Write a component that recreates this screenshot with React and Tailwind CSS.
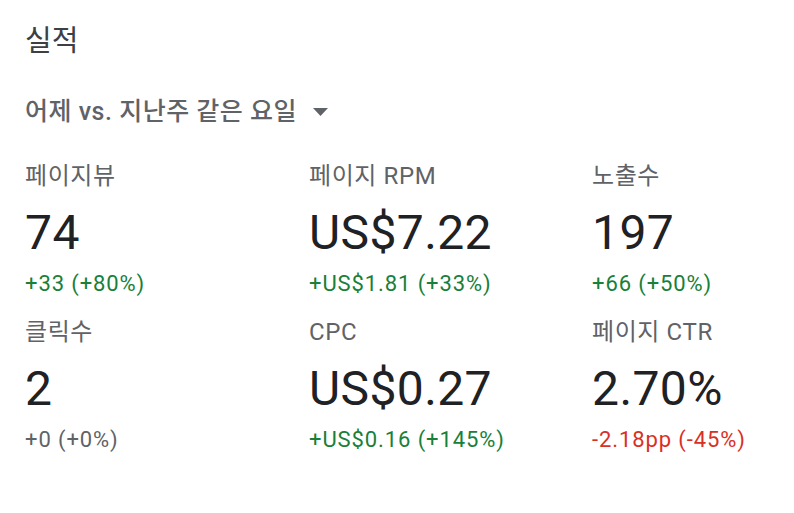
import React from 'react';

const metrics = [
  { label: '페이지뷰', value: '74', delta: '+33 (+80%)', tone: 'up' },
  { label: '페이지 RPM', value: 'US$7.22', delta: '+US$1.81 (+33%)', tone: 'up' },
  { label: '노출수', value: '197', delta: '+66 (+50%)', tone: 'up' },
  { label: '클릭수', value: '2', delta: '+0 (+0%)', tone: 'flat' },
  { label: 'CPC', value: 'US$0.27', delta: '+US$0.16 (+145%)', tone: 'up' },
  { label: '페이지 CTR', value: '2.70%', delta: '-2.18pp (-45%)', tone: 'down' },
];

const toneClass = {
  up: 'text-[#188038]',
  down: 'text-[#d93025]',
  flat: 'text-[#5f6368]',
};

const font = { fontFamily: 'Roboto, "Noto Sans CJK KR", sans-serif' };

const Metric = ({ label, value, delta, tone }) => (
  <div className="flex flex-col">
    <div className="text-[24px] leading-[28px] tracking-[0.6px] text-[#5f6368]">{label}</div>
    <div className="mt-[15px] text-[48px] leading-[56px] text-[#202124] tracking-[0.4px]">{value}</div>
    <div className={`mt-[11px] text-[22px] leading-[24px] tracking-[0.9px] ${toneClass[tone]}`}>{delta}</div>
  </div>
);

export default function App() {
  return (
    <div className="w-[794px] h-[513px] bg-white pl-[25px] pt-[25px]" style={font}>
      <h1 className="text-[29px] leading-[32px] text-[#3c4043]">실적</h1>
      <button className="mt-[39px] flex items-center gap-[16px] text-[25px] leading-[32px] font-medium tracking-[0.5px] text-[#5f6368]">
        <span>어제 vs. 지난주 같은 요일</span>
        <svg width="15" height="8" viewBox="0 0 15 8">
          <path d="M0 0h15L7.5 8z" fill="#5f6368" />
        </svg>
      </button>
      <div className="mt-[34px] grid grid-cols-[284px_283px_1fr] gap-y-[22px]">
        {metrics.map((m) => (
          <Metric key={m.label} {...m} />
        ))}
      </div>
    </div>
  );
}
